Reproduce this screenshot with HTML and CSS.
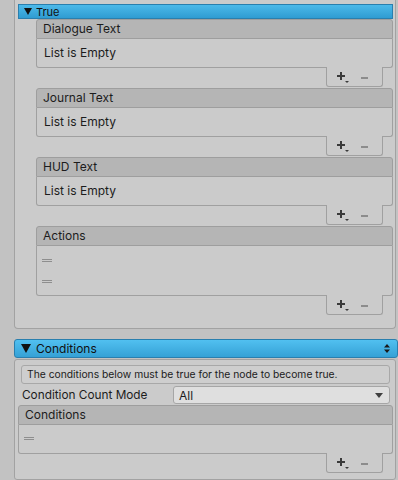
FILE: index.html
```html
<!doctype html>
<html lang="en">
<head>
    <meta charset="utf-8">
    <title>Node Inspector</title>
    <link rel="stylesheet" href="styles.css">
</head>
<body>
<div class="panel panel-true">
    <div class="foldout foldout-small">
        <svg class="tri" width="8" height="7" viewBox="0 0 8 7"><path d="M0 0h8L4 7z"/></svg>
        <span>True</span>
    </div>

    <div class="list">
        <div class="list-header">Dialogue Text</div>
        <div class="list-body"><div class="empty">List is Empty</div></div>
        <div class="list-footer">
            <svg width="12" height="11" viewBox="0 0 12 11"><path d="M3 0h2v3h3v2H5v3H3V5H0V3h3z" fill="#3a3a3a"/><path d="M8 9h4l-2 2z" fill="#3a3a3a"/></svg>
            <svg class="minus" width="7" height="2" viewBox="0 0 7 2"><rect width="7" height="2" fill="#8c8c8c"/></svg>
        </div>
    </div>

    <div class="list">
        <div class="list-header">Journal Text</div>
        <div class="list-body"><div class="empty">List is Empty</div></div>
        <div class="list-footer">
            <svg width="12" height="11" viewBox="0 0 12 11"><path d="M3 0h2v3h3v2H5v3H3V5H0V3h3z" fill="#3a3a3a"/><path d="M8 9h4l-2 2z" fill="#3a3a3a"/></svg>
            <svg class="minus" width="7" height="2" viewBox="0 0 7 2"><rect width="7" height="2" fill="#8c8c8c"/></svg>
        </div>
    </div>

    <div class="list">
        <div class="list-header">HUD Text</div>
        <div class="list-body"><div class="empty">List is Empty</div></div>
        <div class="list-footer">
            <svg width="12" height="11" viewBox="0 0 12 11"><path d="M3 0h2v3h3v2H5v3H3V5H0V3h3z" fill="#3a3a3a"/><path d="M8 9h4l-2 2z" fill="#3a3a3a"/></svg>
            <svg class="minus" width="7" height="2" viewBox="0 0 7 2"><rect width="7" height="2" fill="#8c8c8c"/></svg>
        </div>
    </div>

    <div class="list">
        <div class="list-header">Actions</div>
        <div class="list-body list-body-rows">
            <div class="row"><span class="handle"></span></div>
            <div class="row"><span class="handle"></span></div>
        </div>
        <div class="list-footer">
            <svg width="12" height="11" viewBox="0 0 12 11"><path d="M3 0h2v3h3v2H5v3H3V5H0V3h3z" fill="#3a3a3a"/><path d="M8 9h4l-2 2z" fill="#3a3a3a"/></svg>
            <svg class="minus" width="7" height="2" viewBox="0 0 7 2"><rect width="7" height="2" fill="#8c8c8c"/></svg>
        </div>
    </div>
</div>

<div class="foldout foldout-big">
    <svg class="tri" width="10" height="9" viewBox="0 0 10 9"><path d="M0 0h10L5 9z"/></svg>
    <span>Conditions</span>
    <svg class="updown" width="6" height="9" viewBox="0 0 6 9"><path d="M3 0l3 3.5H0z M0 5.5h6L3 9z"/></svg>
</div>

<div class="panel panel-cond">
    <div class="helpbox">The conditions below must be true for the node to become true.</div>
    <div class="field">
        <label class="field-label">Condition Count Mode</label>
        <div class="dropdown">
            <span>All</span>
            <svg width="8" height="5" viewBox="0 0 8 5"><path d="M0 0h8L4 5z" fill="#3f3f3f"/></svg>
        </div>
    </div>
    <div class="list list-cond">
        <div class="list-header">Conditions</div>
        <div class="list-body list-body-rows">
            <div class="row"><span class="handle"></span></div>
        </div>
        <div class="list-footer">
            <svg width="12" height="11" viewBox="0 0 12 11"><path d="M3 0h2v3h3v2H5v3H3V5H0V3h3z" fill="#3a3a3a"/><path d="M8 9h4l-2 2z" fill="#3a3a3a"/></svg>
            <svg class="minus" width="7" height="2" viewBox="0 0 7 2"><rect width="7" height="2" fill="#8c8c8c"/></svg>
        </div>
    </div>
</div>
</body>
</html>
```

FILE: styles.css
```css
body {
    margin: 0;
    background-color: #c2c2c2;
    font-family: Inter, "Noto Sans", sans-serif;
    font-size: 12px;
    color: #1c1c1c;
}
.panel {
    box-sizing: border-box;
    width: 382px;
    margin-left: 14px;
    background-color: #cbcbcb;
    border: 1px solid #a2a2a2;
}
.panel-true {
    border-top: none;
    border-radius: 0 0 4px 4px;
    padding: 4px 1px 12px 3px;
}
.foldout {
    box-sizing: border-box;
    display: flex;
    align-items: center;
    color: #111;
    background: linear-gradient(#4cb9e9, #2f9cd2);
    border: 1px solid #2a7fae;
}
.foldout .tri {
    fill: #111;
}
.foldout-small {
    height: 15px;
    margin-right: 1px;
    padding-left: 5px;
    font-size: 11px;
    gap: 4px;
}
.foldout-big {
    width: 384px;
    height: 19px;
    margin: 10px 0 1px 14px;
    padding: 0 7px 0 6px;
    border-radius: 3px;
    font-size: 12px;
    gap: 5px;
    background: linear-gradient(#51c0f0, #35a1d6);
}
.foldout-big .updown {
    margin-left: auto;
    fill: #1a1a1a;
}
.list {
    margin: 0 1px 1px 18px;
}
.list-header {
    box-sizing: border-box;
    height: 20px;
    padding-left: 6px;
    line-height: 18px;
    background-color: #b5b5b5;
    border: 1px solid #9e9e9e;
    border-radius: 3px 3px 0 0;
}
.list-body {
    box-sizing: border-box;
    height: 29px;
    padding: 6px 0 0 7px;
    border: 1px solid #a0a0a0;
    border-top: none;
    border-radius: 0 0 3px 3px;
}
.list-body-rows {
    padding: 0 0 0 5px;
}
.panel-true .list-body-rows {
    height: 50px;
    padding-top: 4px;
}
.row {
    height: 21px;
    display: flex;
    align-items: center;
}
.handle {
    box-sizing: border-box;
    width: 10px;
    height: 3px;
    border-top: 1px solid #8e8e8e;
    border-bottom: 1px solid #8e8e8e;
}
.list-footer {
    box-sizing: border-box;
    display: flex;
    align-items: center;
    gap: 12px;
    width: 57px;
    height: 20px;
    margin: -1px 10px 0 auto;
    padding: 1px 0 0 10px;
    background-color: #cbcbcb;
    border: 1px solid #a0a0a0;
    border-top: none;
    border-radius: 0 0 3px 3px;
    position: relative;
}
.list-footer .minus {
    margin-top: 1px;
}
.panel-cond {
    height: 121px;
    border-radius: 3px;
    padding: 5px 5px 0 6px;
}
.helpbox {
    box-sizing: border-box;
    height: 19px;
    padding-left: 5px;
    line-height: 17px;
    font-size: 10.3px;
    background-color: #cecece;
    border: 1px solid #a8a8a8;
    border-radius: 3px;
}
.field {
    display: flex;
    align-items: center;
    height: 18px;
    margin-top: 2px;
}
.field-label {
    width: 151px;
    padding-left: 1px;
    font-size: 11.8px;
}
.dropdown {
    box-sizing: border-box;
    flex: 1;
    display: flex;
    align-items: center;
    justify-content: space-between;
    height: 18px;
    padding: 0 6px 0 5px;
    background-color: #dfdfdf;
    border: 1px solid #a6a6a6;
    border-radius: 3px;
}
.list-cond {
    margin: 1px -3px 0 -3px;
}
.list-cond .list-body-rows {
    padding-top: 3px;
}
```
